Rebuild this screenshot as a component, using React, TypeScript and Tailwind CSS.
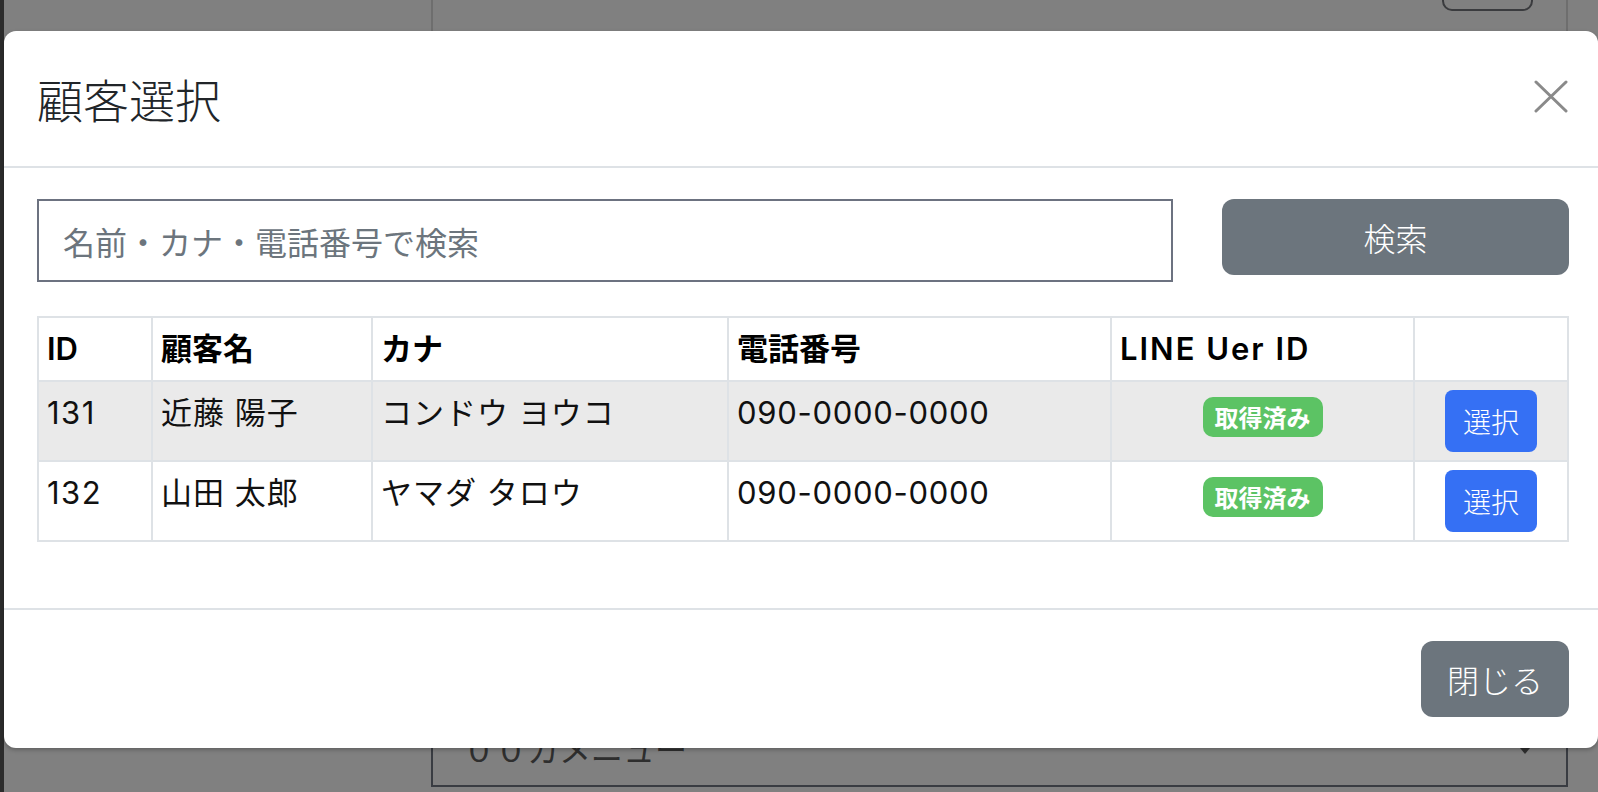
import React from "react";

const font = { fontFamily: '"Noto Sans CJK JP", "Noto Sans", sans-serif' };
const latin = { fontFamily: 'Inter, "Noto Sans CJK JP", sans-serif' };

const rows = [
  { id: "131", name: "近藤 陽子", kana: "コンドウ ヨウコ", tel: "090-0000-0000", striped: true },
  { id: "132", name: "山田 太郎", kana: "ヤマダ タロウ", tel: "090-0000-0000", striped: false },
];

const headers = [
  { t: "ID", c: "" },
  { t: "顧客名", c: "" },
  { t: "カナ", c: "" },
  { t: "電話番号", c: "" },
  { t: "LINE Uer ID", c: "tracking-[2px]" },
  { t: "", c: "" },
];

export default function App() {
  return (
    <div className="relative w-[1598px] h-[792px] overflow-hidden bg-[#808080]" style={font}>
      {/* background page under overlay */}
      <div className="absolute left-0 top-0 h-full w-[4px] bg-[#2c2c2c]" />
      <div className="absolute left-[431px] top-0 h-[40px] w-[2px] bg-[#6e6e6e]" />
      <div className="absolute left-[1566px] top-0 h-[40px] w-[2px] bg-[#6e6e6e]" />
      <div className="absolute left-[1442px] top-[-20px] h-[31px] w-[91px] rounded-[10px] border-2 border-[#3a3b3e]" />
      <div className="absolute left-[431px] top-[700px] h-[87px] w-[1137px] border-2 border-[#393c42] pl-[30px] pt-[22px] text-[32px] leading-[1.5] text-[#2e2e2e]">
        ００カメニュー
        <div className="absolute right-[36px] top-[46px] h-0 w-0 border-x-[5px] border-t-[6px] border-x-transparent border-t-[#2e2e2e]" />
      </div>

      {/* modal */}
      <div className="absolute left-[4px] top-[31px] flex h-[717px] w-[1594px] flex-col rounded-[12px] bg-white shadow-[0_2px_4px_rgba(0,0,0,0.25)]">
        <div className="flex h-[137px] items-center justify-between border-b-2 border-[#dee2e6] pl-[33px] pr-[30px]">
          <h4 className="text-[46px] font-light leading-[1.5] text-[#212529]">顧客選択</h4>
          <svg width="34" height="33" viewBox="0 0 34 33" className="mb-[4px]">
            <line x1="2" y1="2" x2="32" y2="31" stroke="#8a8a8a" strokeWidth="3" strokeLinecap="round" />
            <line x1="32" y1="2" x2="2" y2="31" stroke="#8a8a8a" strokeWidth="3" strokeLinecap="round" />
          </svg>
        </div>

        <div className="flex-1 pl-[33px] pr-[29px] pt-[31px]">
          <div className="flex items-start gap-[49px]">
            <div className="flex h-[83px] flex-1 items-center border-2 border-[#6c7280] pl-[24px] text-[32px] text-[#6c757d]">
              名前・カナ・電話番号で検索
            </div>
            <button className="h-[76px] w-[347px] rounded-[12px] bg-[#6c757d] text-[32px] font-light text-white">
              検索
            </button>
          </div>

          <table
            className="mt-[34px] w-[1530px] table-fixed border-collapse border-2 border-[#dee2e6] text-[31px]"
            style={latin}
          >
            <colgroup>
              <col className="w-[114px]" />
              <col className="w-[220px]" />
              <col className="w-[356px]" />
              <col className="w-[383px]" />
              <col className="w-[303px]" />
              <col className="w-[154px]" />
            </colgroup>
            <thead>
              <tr>
                {headers.map((h, i) => (
                  <th
                    key={i}
                    className={`border-2 border-[#dee2e6] px-[8px] py-[8px] text-left align-top font-semibold leading-[46px] text-black ${h.c}`}
                  >
                    {h.t}
                  </th>
                ))}
              </tr>
            </thead>
            <tbody>
              {rows.map((r) => (
                <tr key={r.id} className={r.striped ? "bg-[#eaeaea]" : "bg-white"}>
                  <td className="border-2 border-[#dee2e6] px-[8px] py-[8px] align-top leading-[46px] tracking-[1.5px] text-[#111]">{r.id}</td>
                  <td className="border-2 border-[#dee2e6] px-[8px] py-[8px] align-top leading-[46px] tracking-[1px] text-[#111]">{r.name}</td>
                  <td className="border-2 border-[#dee2e6] px-[8px] py-[8px] align-top leading-[46px] tracking-[1px] text-[#111]">{r.kana}</td>
                  <td className="border-2 border-[#dee2e6] px-[8px] py-[8px] align-top leading-[46px] tracking-[0.7px] text-[#111]">{r.tel}</td>
                  <td className="border-2 border-[#dee2e6] px-[8px] py-[8px] align-top" style={font}>
                    <div className="flex justify-center pt-[7px]">
                      <span className="flex h-[40px] w-[120px] items-center justify-center rounded-[10px] bg-[#5cc364] text-[24px] font-bold text-white">
                        取得済み
                      </span>
                    </div>
                  </td>
                  <td className="border-2 border-[#dee2e6] px-[8px] py-[8px] align-top" style={font}>
                    <div className="flex justify-center">
                      <button className="h-[62px] w-[92px] rounded-[8px] bg-[#3570f4] text-[28px] font-light text-white">
                        選択
                      </button>
                    </div>
                  </td>
                </tr>
              ))}
            </tbody>
          </table>
        </div>

        <div className="flex h-[140px] items-center justify-end border-t-2 border-[#dee2e6] pr-[29px]">
          <button className="h-[76px] w-[148px] rounded-[12px] bg-[#6c757d] text-[32px] font-light text-white">
            閉じる
          </button>
        </div>
      </div>
    </div>
  );
}
